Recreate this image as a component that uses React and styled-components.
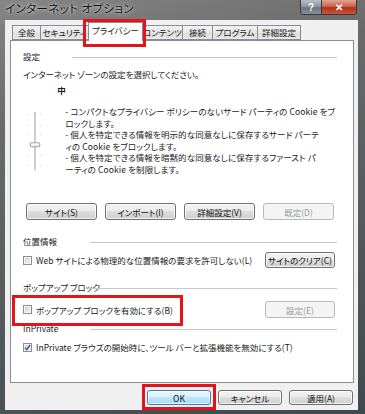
import React from 'react';
import styled, { createGlobalStyle } from 'styled-components';

const GlobalStyle = createGlobalStyle`
  html, body {
    margin: 0;
    padding: 0;
    background: #3c474b;
  }
  body {
    width: 365px;
    height: 414px;
    overflow: hidden;
    font-family: "Noto Sans CJK JP", "Liberation Sans", sans-serif;
    font-feature-settings: "palt";
    color: #1b1b1b;
  }
`;

const Window = styled.div`
  box-sizing: border-box;
  width: 365px;
  height: 414px;
  display: flex;
  flex-direction: column;
  padding: 0 7px 4px 5px;
  background: linear-gradient(165deg, #858585 0%, #6a6a6a 25%, #555b5e 60%, #3f4a4e 100%);
`;

const TitleBar = styled.div`
  height: 20px;
  display: flex;
  align-items: flex-start;
`;

const Title = styled.div`
  font-size: 11.5px;
  line-height: 17px;
  color: #111;
  text-shadow: 0 0 5px rgba(255, 255, 255, 0.75), 0 0 2px rgba(255, 255, 255, 0.6);
  letter-spacing: 0.4px;
`;

const Captions = styled.div`
  margin-left: auto;
  margin-right: 1px;
  display: flex;
  border: 1px solid #3b3b3b;
  border-top: none;
  border-radius: 0 0 4px 4px;
  overflow: hidden;
  height: 14px;
`;

const CaptionButton = styled.div`
  width: ${p => p.$w}px;
  display: flex;
  align-items: center;
  justify-content: center;
  color: #fff;
  font-family: "Liberation Sans", sans-serif;
  font-weight: bold;
  font-size: 10px;
  background: ${p => p.$close
    ? 'linear-gradient(#e0a597 0%, #c8654f 45%, #b4301a 55%, #c9553c 100%)'
    : 'linear-gradient(#b8bfc6 0%, #8f98a1 45%, #6c7680 55%, #85909a 100%)'};
  & + & {
    border-left: 1px solid #3b3b3b;
  }
`;

const Client = styled.div`
  flex: 1;
  display: flex;
  flex-direction: column;
  padding: 2px 4px 5px 5px;
  background: #f0f0f0;
`;

const TabStrip = styled.div`
  position: relative;
  z-index: 1;
  height: 19px;
  margin-bottom: -1px;
  padding-left: 2px;
  display: flex;
  align-items: flex-end;
`;

const Tab = styled.div`
  position: relative;
  box-sizing: border-box;
  width: ${p => p.$w}px;
  height: ${p => (p.$active ? 19 : 15)}px;
  margin-bottom: ${p => (p.$active ? 0 : 1)}px;
  margin-left: -1px;
  z-index: ${p => (p.$active ? 2 : 0)};
  border: 1px solid #898c95;
  border-bottom: ${p => (p.$active ? 'none' : '1px solid #898c95')};
  background: ${p => (p.$active ? '#fff' : 'linear-gradient(#f3f3f3, #e6e6e6 50%, #dcdcdc 51%, #e9e9e9)')};
  font-size: 8.5px;
  line-height: ${p => (p.$active ? 15 : 13)}px;
  text-align: center;
  white-space: nowrap;
  &:first-child {
    margin-left: 0;
  }
`;

const Highlight = styled.div`
  position: absolute;
  top: ${p => p.$t}px;
  left: ${p => p.$l}px;
  right: ${p => p.$r}px;
  bottom: ${p => p.$b}px;
  border: 3px solid #e3141c;
  pointer-events: none;
`;

const Panel = styled.div`
  box-sizing: border-box;
  height: 343px;
  display: flex;
  flex-direction: column;
  padding: 0 18px 0 12px;
  background: #fff;
  border: 1px solid #898c95;
`;

const GroupHeader = styled.div`
  display: flex;
  align-items: center;
  height: 12px;
  margin-top: ${p => p.$mt}px;
  margin-right: -2px;
  font-size: 8.5px;
  line-height: 12px;
`;

const GroupLabel = styled.span`
  width: ${p => p.$w}px;
  flex: none;
  white-space: nowrap;
`;

const GroupLine = styled.div`
  flex: 1;
  height: 1px;
  margin-top: 2px;
  background: #c6c9cc;
`;

const Text = styled.div`
  margin-top: ${p => p.$mt || 0}px;
  font-size: 8.5px;
  line-height: 12px;
  white-space: nowrap;
`;

const SliderBlock = styled.div`
  display: flex;
  height: 108px;
  margin-top: 5px;
`;

const LevelText = styled.div`
  margin-left: 11px;
  display: flex;
  flex-direction: column;
`;

const Level = styled.div`
  font-size: 8.5px;
  font-weight: bold;
  line-height: 11px;
`;

const Desc = styled.div`
  margin-top: 10px;
  padding-left: 8px;
  font-size: 8.5px;
  line-height: 11.5px;
  letter-spacing: 0.1px;
  white-space: nowrap;
`;

const ButtonRow = styled.div`
  display: flex;
  gap: 8px;
  margin-top: 10px;
  padding-left: 3px;
`;

const Button = styled.div`
  box-sizing: border-box;
  position: relative;
  width: ${p => p.$w}px;
  height: ${p => p.$h}px;
  flex: none;
  display: flex;
  align-items: center;
  justify-content: center;
  font-size: 8.5px;
  white-space: nowrap;
  border-radius: 3px;
  border: 1px solid ${p => (p.$disabled ? '#b5b9bc' : p.$default ? '#3c7fb1' : '#707070')};
  color: ${p => (p.$disabled ? '#9a9a9a' : '#111')};
  background: ${p => p.$disabled
    ? '#f4f4f4'
    : p.$default
      ? 'linear-gradient(#eaf6fd 0%, #d9f0fc 49%, #bee6fd 50%, #a7d9f5 100%)'
      : 'linear-gradient(#f2f2f2 0%, #ebebeb 49%, #dddddd 50%, #cfcfcf 100%)'};
  box-shadow: inset 0 0 0 1px ${p => (p.$disabled ? 'transparent' : 'rgba(255,255,255,0.7)')};
`;

const OptionRow = styled.div`
  display: flex;
  align-items: center;
  justify-content: space-between;
  height: ${p => p.$h}px;
  margin-top: ${p => p.$mt}px;
`;

const Check = styled.label`
  position: relative;
  display: flex;
  align-items: center;
  gap: 4px;
  font-size: 8.5px;
  white-space: nowrap;
`;

const Box = styled.span`
  box-sizing: border-box;
  width: 9px;
  height: 9px;
  flex: none;
  display: flex;
  align-items: center;
  justify-content: center;
  border: 1px solid #8e8f8f;
  background: linear-gradient(135deg, #cbcfd5, #f6f6f6);
  box-shadow: inset 0 0 0 1px #f4f4f4;
`;

const Footer = styled.div`
  display: flex;
  justify-content: flex-end;
  gap: 7px;
  margin-top: 7px;
  padding-right: 1px;
`;

const Slider = () => (
  <svg width="40" height="108" viewBox="0 0 40 108">
    {[12, 30, 46, 64, 81, 99].map(y => (
      <g key={y} fill="#b9b9b9">
        <rect x="9" y={y} width="2" height="1" />
        <rect x="29" y={y} width="2" height="1" />
      </g>
    ))}
    <rect x="19.5" y="8" width="2" height="100" fill="#c9c9c9" stroke="#a8a8a8" strokeWidth="0.5" />
    <rect x="12.5" y="60.5" width="16" height="7" rx="1" fill="#ececec" stroke="#6f6f6f" />
    <rect x="14" y="62" width="13" height="2" fill="#fafafa" />
  </svg>
);

const CheckMark = () => (
  <svg width="7" height="7" viewBox="0 0 7 7">
    <path d="M1 3.6 L2.8 5.6 L6.2 0.8" fill="none" stroke="#3a4f8a" strokeWidth="1.4" />
  </svg>
);

const tabs = [
  { label: '全般', w: 29 },
  { label: 'セキュリティ', w: 49 },
  { label: 'プライバシー', w: 55, active: true },
  { label: 'コンテンツ', w: 41 },
  { label: '接続', w: 31 },
  { label: 'プログラム', w: 46 },
  { label: '詳細設定', w: 44 },
];

const App = () => (
  <Window>
    <GlobalStyle />
    <TitleBar>
      <Title>インターネット オプション</Title>
      <Captions>
        <CaptionButton $w={20}>?</CaptionButton>
        <CaptionButton $w={34} $close>✕</CaptionButton>
      </Captions>
    </TitleBar>
    <Client>
      <TabStrip>
        {tabs.map(t => (
          <Tab key={t.label} $w={t.w} $active={t.active}>
            {t.label}
            {t.active && <Highlight $t={-4} $l={-6} $r={-4} $b={-6} />}
          </Tab>
        ))}
      </TabStrip>
      <Panel>
        <GroupHeader $mt={9}>
          <GroupLabel $w={49}>設定</GroupLabel>
          <GroupLine />
        </GroupHeader>
        <Text $mt={6}>インターネット ゾーンの設定を選択してください。</Text>
        <SliderBlock>
          <Slider />
          <LevelText>
            <Level>中</Level>
            <Desc>
              <div>- コンパクトなプライバシー ポリシーのないサード パーティの Cookie をブ</div>
              <div>ロックします。</div>
              <div>- 個人を特定できる情報を明示的な同意なしに保存するサード パーテ</div>
              <div>ィの Cookie をブロックします。</div>
              <div>- 個人を特定できる情報を暗黙的な同意なしに保存するファースト パ</div>
              <div>ーティの Cookie を制限します。</div>
            </Desc>
          </LevelText>
        </SliderBlock>
        <ButtonRow>
          <Button $w={71} $h={17}>サイト(S)</Button>
          <Button $w={71} $h={17}>インポート(I)</Button>
          <Button $w={71} $h={17}>詳細設定(V)</Button>
          <Button $w={71} $h={17} $disabled>既定(D)</Button>
        </ButtonRow>

        <GroupHeader $mt={15}>
          <GroupLabel $w={67}>位置情報</GroupLabel>
          <GroupLine />
        </GroupHeader>
        <OptionRow $h={16} $mt={5}>
          <Check>
            <Box />
            Web サイトによる物理的な位置情報の要求を許可しない(L)
          </Check>
          <Button $w={70} $h={16}>サイトのクリア(C)</Button>
        </OptionRow>

        <GroupHeader $mt={13}>
          <GroupLabel $w={65}>ポップアップ ブロック</GroupLabel>
          <GroupLine />
        </GroupHeader>
        <OptionRow $h={17} $mt={8}>
          <Check>
            <Box />
            ポップアップ ブロックを有効にする(B)
            <Highlight $t={-9} $l={-11} $r={-10} $b={-10} />
          </Check>
          <Button $w={70} $h={17} $disabled>設定(E)</Button>
        </OptionRow>

        <GroupHeader $mt={4}>
          <GroupLabel $w={67}>InPrivate</GroupLabel>
          <GroupLine />
        </GroupHeader>
        <OptionRow $h={12} $mt={7}>
          <Check>
            <Box><CheckMark /></Box>
            InPrivate ブラウズの開始時に、ツール バーと拡張機能を無効にする(T)
          </Check>
        </OptionRow>
      </Panel>
      <Footer>
        <Button $w={64} $h={15} $default>
          OK
          <Highlight $t={-7} $l={-6} $r={-6} $b={-6} />
        </Button>
        <Button $w={64} $h={15}>キャンセル</Button>
        <Button $w={64} $h={15}>適用(A)</Button>
      </Footer>
    </Client>
  </Window>
);

export default App;
